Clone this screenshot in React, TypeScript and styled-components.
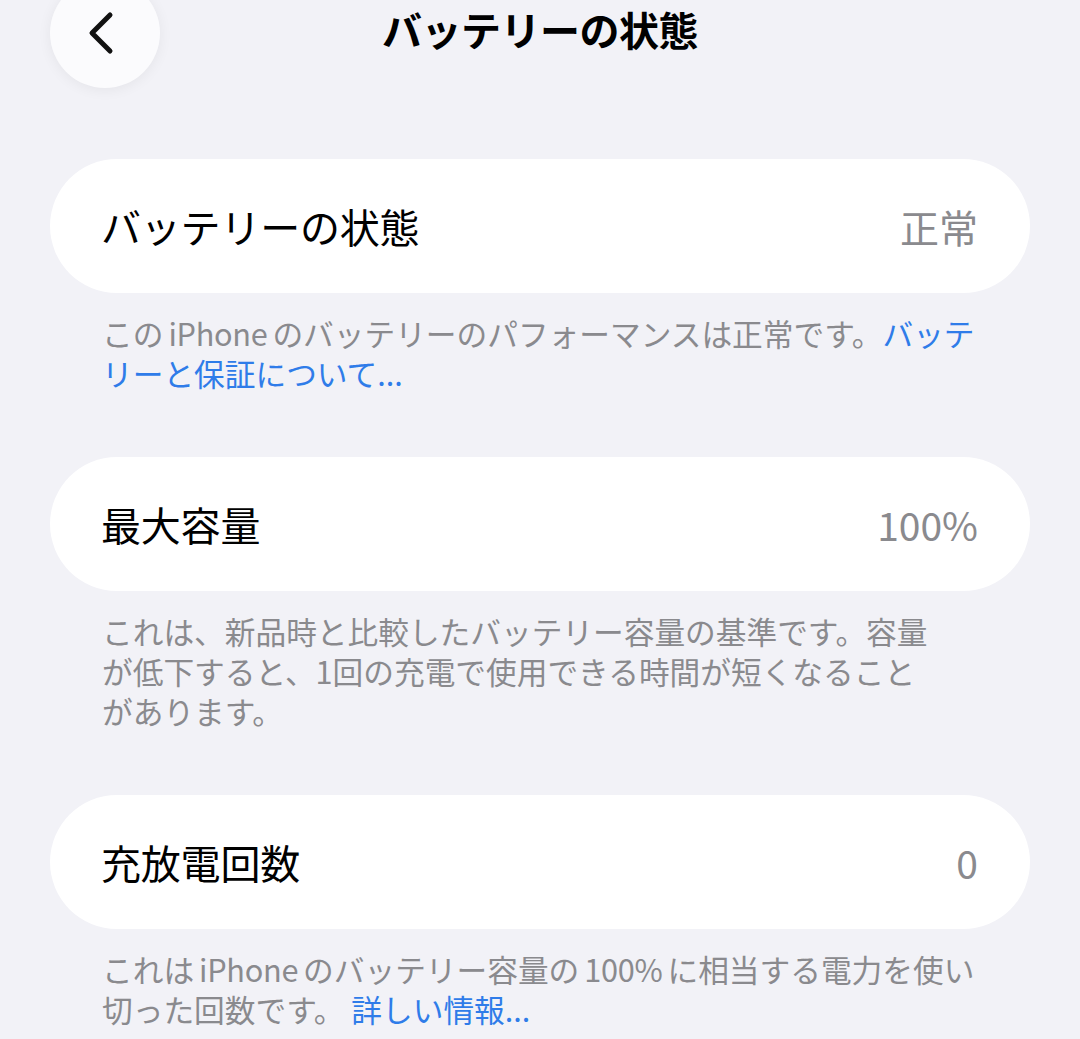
import React from "react";
import styled, { createGlobalStyle } from "styled-components";

const Global = createGlobalStyle`
  html, body {
    margin: 0;
    padding: 0;
    background: #f2f2f7;
  }
  body {
    font-family: "Noto Sans CJK JP", "Noto Sans", sans-serif;
    -webkit-font-smoothing: antialiased;
  }
`;

const Page = styled.div`
  width: 1080px;
  min-height: 1039px;
  background: #f2f2f7;
  overflow: hidden;
  box-sizing: border-box;
`;

const Header = styled.header`
  display: grid;
  grid-template-columns: 110px 1fr 110px;
  align-items: start;
  height: 88px;
  padding: 0 50px;
`;

const BackButton = styled.button`
  width: 110px;
  height: 110px;
  margin-top: -22px;
  border: none;
  border-radius: 50%;
  background: #fbfbfd;
  box-shadow: 0 2px 14px rgba(0, 0, 0, 0.06);
  display: flex;
  align-items: center;
  justify-content: center;
  padding: 0 8px 0 0;
  box-sizing: border-box;
`;

const Title = styled.h1`
  margin: 0;
  text-align: center;
  font-size: 40px;
  line-height: 58px;
  font-weight: 700;
  color: #000;
  letter-spacing: -0.5px;
`;

const Content = styled.main`
  display: flex;
  flex-direction: column;
  padding: 71px 50px 0;
`;

const Section = styled.section<{ $last?: boolean }>`
  margin-bottom: ${(p) => (p.$last ? "0" : "64px")};
`;

const Card = styled.div`
  height: 134px;
  border-radius: 67px;
  background: #fff;
  display: flex;
  align-items: center;
  justify-content: space-between;
  padding: 0 52px 0 51px;
`;

const Label = styled.span`
  font-size: 40px;
  font-weight: 400;
  color: #000;
  letter-spacing: -0.2px;
`;

const Value = styled.span`
  font-size: 39px;
  font-weight: 400;
  color: #8a8a8e;
`;

const Note = styled.p`
  margin: 0;
  padding: 20px 52px 0;
  font-size: 30.7px;
  line-height: 40px;
  color: #8a8a8e;
  white-space: nowrap;
`;

const Latin = styled.span`
  margin: 0 5px;
  letter-spacing: -0.3px;
`;

const Link = styled.a`
  color: #2f7ce9;
  text-decoration: none;
`;

const Chevron = () => (
  <svg width="34" height="44" viewBox="0 0 34 44" fill="none">
    <path
      d="M26 4 L8 22 L26 40"
      stroke="#111"
      strokeWidth="5"
      strokeLinecap="round"
      strokeLinejoin="round"
    />
  </svg>
);

export default function App() {
  return (
    <Page>
      <Global />
      <Header>
        <BackButton aria-label="戻る">
          <Chevron />
        </BackButton>
        <Title>バッテリーの状態</Title>
        <span />
      </Header>
      <Content>
        <Section>
          <Card>
            <Label>バッテリーの状態</Label>
            <Value>正常</Value>
          </Card>
          <Note>
            この<Latin>iPhone</Latin>のバッテリーのパフォーマンスは正常です。
            <Link>バッテ</Link>
            <br />
            <Link>リーと保証について...</Link>
          </Note>
        </Section>
        <Section>
          <Card>
            <Label>最大容量</Label>
            <Value>100%</Value>
          </Card>
          <Note>
            これは、新品時と比較したバッテリー容量の基準です。容量
            <br />
            が低下すると、1回の充電で使用できる時間が短くなること
            <br />
            があります。
          </Note>
        </Section>
        <Section $last>
          <Card>
            <Label>充放電回数</Label>
            <Value>0</Value>
          </Card>
          <Note>
            これは<Latin>iPhone</Latin>のバッテリー容量の<Latin>100%</Latin>に相当する電力を使い
            <br />
            切った回数です。 <Link>詳しい情報...</Link>
          </Note>
        </Section>
      </Content>
    </Page>
  );
}
